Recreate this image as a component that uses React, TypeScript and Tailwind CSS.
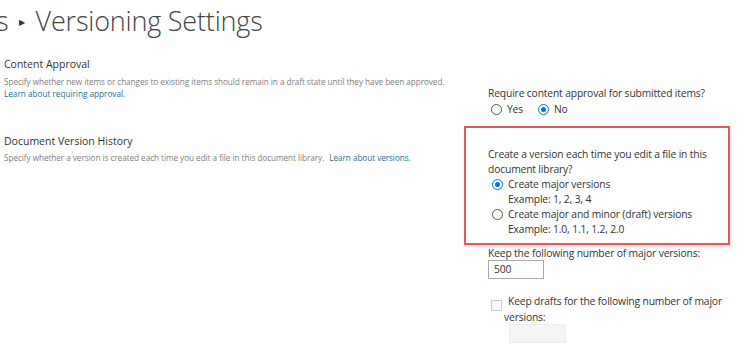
import React from 'react';

const font = { fontFamily: '"Open Sans", "Noto Sans", sans-serif' };

const Radio = ({ checked }: { checked?: boolean }) => (
    <span
        className={`inline-flex items-center justify-center w-[11px] h-[11px] rounded-full border shrink-0 ${checked ? 'border-[#0078d4]' : 'border-[#555]'}`}
    >
        {checked && <span className="w-[5px] h-[5px] rounded-full bg-[#0078d4]" />}
    </span>
);

const App = () => {
    return (
        <div className="w-[750px] h-[362px] overflow-hidden bg-white text-[#333] relative" style={font}>
            {/* Page title / breadcrumb */}
            <div className="flex items-center h-[40px] text-[#444]">
                <span className="text-[27px] font-light leading-none -ml-[4px]">s</span>
                <span className="text-[8px] text-[#333] ml-[10px] mr-[11px] mt-[3px]">&#9654;</span>
                <span className="text-[27px] font-light leading-none tracking-[-0.2px]">Versioning Settings</span>
            </div>

            <div className="flex">
                {/* Left column: section headings */}
                <div className="w-[488px] pl-[4px]">
                    <div className="mt-[17px] text-[10.5px] text-[#333] leading-[14px]">Content Approval</div>
                    <div className="mt-[5px] text-[8.2px] text-[#808080] leading-[12px] tracking-[-0.05px]">
                        Specify whether new items or changes to existing items should remain in a draft state until they have been approved.
                    </div>
                    <div className="text-[8.2px] text-[#1f6f8b] leading-[12px]">Learn about requiring approval.</div>

                    <div className="mt-[34px] text-[10.5px] text-[#333] leading-[14px]">Document Version History</div>
                    <div className="mt-[4px] text-[8.2px] text-[#808080] leading-[12px] tracking-[-0.05px]">
                        Specify whether a version is created each time you edit a file in this document library.
                        <span className="ml-[5px] text-[#1f6f8b]">Learn about versions.</span>
                    </div>
                </div>

                {/* Right column: controls */}
                <div className="flex-1 text-[10.3px] leading-[15px] tracking-[-0.15px]">
                    <div className="mt-[46px]">Require content approval for submitted items?</div>
                    <div className="flex items-center gap-[5px] mt-[1px] pl-[3px]">
                        <Radio />
                        <span className="mr-[10px]">Yes</span>
                        <Radio checked />
                        <span>No</span>
                    </div>

                    <div className="-ml-[24px] mt-[9px] w-[266px] h-[119px] border-2 border-[#de5a5f] shadow-[1px_2px_3px_rgba(0,0,0,0.15)] pl-[22px] pt-[19px]">
                        <div>Create a version each time you edit a file in this</div>
                        <div>document library?</div>
                        <div className="flex items-center gap-[5px] pl-[4px]">
                            <Radio checked />
                            <span>Create major versions</span>
                        </div>
                        <div className="pl-[20px]">Example: 1, 2, 3, 4</div>
                        <div className="flex items-center gap-[5px] pl-[4px]">
                            <Radio />
                            <span>Create major and minor (draft) versions</span>
                        </div>
                        <div className="pl-[20px]">Example: 1.0, 1.1, 1.2, 2.0</div>
                    </div>

                    <div className="mt-[1px]">Keep the following number of major versions:</div>
                    <div className="-mt-[1px] w-[56px] h-[19px] border border-[#aaa] px-[5px] flex items-center">500</div>

                    <div className="mt-[15px] flex items-start pl-[3px]">
                        <span className="mt-[6px] w-[11px] h-[11px] border border-[#ccc] bg-[#fafafa] shrink-0" />
                        <span className="ml-[6px]">Keep drafts for the following number of major</span>
                    </div>
                    <div className="pl-[16px] -mt-[1px]">versions:</div>
                    <div className="ml-[21px] -mt-[1px] w-[57px] h-[19px] border border-[#eee] bg-[#f5f5f5]" />
                </div>
            </div>
        </div>
    );
};

export default App;
